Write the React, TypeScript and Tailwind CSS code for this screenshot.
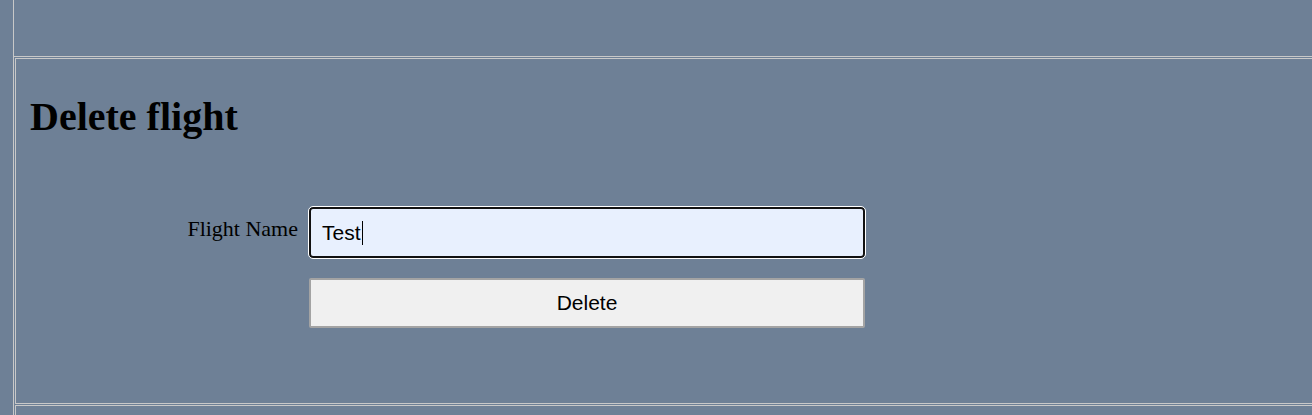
export default function App() {
  return (
    <div className="min-h-[415px] bg-[#6e8096] pl-[13px] font-['Liberation_Serif',serif] text-black">
      <div className="min-h-[415px] border-l border-[#c8c8c8]">
        {/* previous row */}
        <div className="h-[57px] border-b border-[#c8c8c8]" />

        {/* delete flight row */}
        <div className="mt-px ml-px h-[346px] border-y border-l border-[#c8c8c8] pl-[14px] pt-[35px]">
          <h1 className="h-[46px] text-[40px] leading-[46px] font-bold">Delete flight</h1>

          <div className="mt-[67px] flex items-start">
            <label className="w-[268px] pt-[9px] text-right text-[22px] leading-[26px]">Flight Name</label>
            <div className="ml-[11px] flex flex-col gap-[20px]">
              <div className="flex h-[51px] w-[556px] items-center rounded-[4px] border-2 border-[#111] bg-[#e8f0fe] px-[11px] font-['Liberation_Sans',Arial,sans-serif] text-[21px] outline outline-1 outline-white">
                <span>Test</span>
                <span className="ml-px h-[24px] w-px bg-black" />
              </div>
              <button className="h-[50px] w-[556px] rounded-[2px] border-2 border-[#a3a3a3] bg-[#f0f0f0] font-['Liberation_Sans',Arial,sans-serif] text-[21px]">
                Delete
              </button>
            </div>
          </div>
        </div>

        {/* next row */}
        <div className="mt-px ml-px h-[10px] border-t border-l border-[#c8c8c8]" />
      </div>
    </div>
  );
}
